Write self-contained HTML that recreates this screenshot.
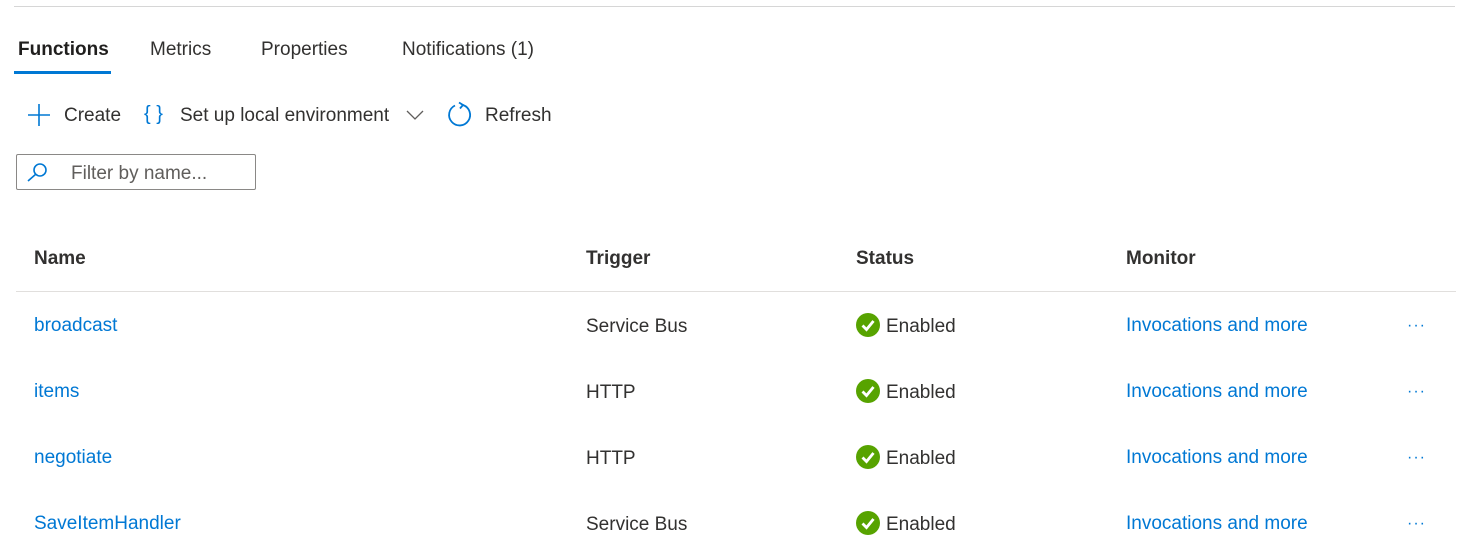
<!DOCTYPE html>
<html><head><style>
body{margin:0;width:1480px;height:552px;background:#fff;font-family:"Liberation Sans",sans-serif;color:#323130;position:relative;overflow:hidden}
.a{position:absolute;white-space:nowrap;line-height:24px;font-size:19px}
.l{color:#0078d4}
.h{font-weight:600;color:#323130}
.d{position:absolute;color:#0078d4;font-size:16px;letter-spacing:1px}
</style></head><body>
<div style="position:absolute;left:14px;top:6px;width:1441px;height:1px;background:#d6d6d6"></div>
<div class="a" style="left:18px;top:38px;font-weight:600;color:#201f1e">Functions</div>
<div class="a" style="left:150px;top:38px">Metrics</div>
<div class="a" style="left:261px;top:38px">Properties</div>
<div class="a" style="left:402px;top:38px">Notifications (1)</div>
<div style="position:absolute;left:14px;top:71px;width:97px;height:3px;background:#0078d4"></div>

<svg style="position:absolute;left:27px;top:103px" width="24" height="24"><path d="M12 1V23M1 12H23" stroke="#0078d4" stroke-width="1.6"/></svg>
<div class="a" style="left:64px;top:104px">Create</div>
<div class="a l" style="left:144px;top:102px;font-size:20px">{ }</div>
<div class="a" style="left:180px;top:104px">Set up local environment</div>
<svg style="position:absolute;left:406px;top:109px" width="18" height="12"><path d="M1 2L9 10L17 2" stroke="#605e5c" stroke-width="1.3" fill="none"/></svg>
<svg style="position:absolute;left:446px;top:101px" width="28" height="28"><path d="M9 4.5A10.5 10.5 0 1 0 17 4" stroke="#0078d4" stroke-width="1.8" fill="none"/><path d="M13 1.5L17 4L14 7.5" stroke="#0078d4" stroke-width="1.8" fill="none"/></svg>
<div class="a" style="left:485px;top:104px">Refresh</div>

<div style="position:absolute;left:16px;top:154px;width:238px;height:34px;border:1px solid #8a8886;border-radius:2px"></div>
<svg style="position:absolute;left:26px;top:161px" width="24" height="22"><circle cx="14" cy="9" r="6" stroke="#0078d4" stroke-width="1.6" fill="none"/><path d="M10 13L2 20" stroke="#0078d4" stroke-width="1.6"/></svg>
<div class="a" style="left:71px;top:162px;color:#605e5c">Filter by name...</div>

<div class="a h" style="left:34px;top:247px">Name</div>
<div class="a h" style="left:586px;top:247px">Trigger</div>
<div class="a h" style="left:856px;top:247px">Status</div>
<div class="a h" style="left:1126px;top:247px">Monitor</div>
<div style="position:absolute;left:16px;top:291px;width:1440px;height:1px;background:#e1dfdd"></div>

<div class="a l" style="left:34px;top:314px">broadcast</div>
<div class="a l" style="left:34px;top:380px">items</div>
<div class="a l" style="left:34px;top:446px">negotiate</div>
<div class="a l" style="left:34px;top:512px">SaveItemHandler</div>
<div class="a" style="left:586px;top:315px">Service Bus</div>
<div class="a" style="left:586px;top:381px">HTTP</div>
<div class="a" style="left:586px;top:447px">HTTP</div>
<div class="a" style="left:586px;top:513px">Service Bus</div>

<svg style="position:absolute;left:856px;top:313px" width="24" height="24"><circle cx="12" cy="12" r="12" fill="#57a300"/><path d="M6.5 12.5L10.5 16.5L17.5 8" stroke="#fff" stroke-width="2.8" fill="none"/></svg>
<svg style="position:absolute;left:856px;top:379px" width="24" height="24"><circle cx="12" cy="12" r="12" fill="#57a300"/><path d="M6.5 12.5L10.5 16.5L17.5 8" stroke="#fff" stroke-width="2.8" fill="none"/></svg>
<svg style="position:absolute;left:856px;top:445px" width="24" height="24"><circle cx="12" cy="12" r="12" fill="#57a300"/><path d="M6.5 12.5L10.5 16.5L17.5 8" stroke="#fff" stroke-width="2.8" fill="none"/></svg>
<svg style="position:absolute;left:856px;top:511px" width="24" height="24"><circle cx="12" cy="12" r="12" fill="#57a300"/><path d="M6.5 12.5L10.5 16.5L17.5 8" stroke="#fff" stroke-width="2.8" fill="none"/></svg>
<div class="a" style="left:886px;top:315px">Enabled</div>
<div class="a" style="left:886px;top:381px">Enabled</div>
<div class="a" style="left:886px;top:447px">Enabled</div>
<div class="a" style="left:886px;top:513px">Enabled</div>

<div class="a l" style="left:1126px;top:314px">Invocations and more</div>
<div class="a l" style="left:1126px;top:380px">Invocations and more</div>
<div class="a l" style="left:1126px;top:446px">Invocations and more</div>
<div class="a l" style="left:1126px;top:512px">Invocations and more</div>
<div class="d" style="left:1407px;top:317px">···</div>
<div class="d" style="left:1407px;top:383px">···</div>
<div class="d" style="left:1407px;top:449px">···</div>
<div class="d" style="left:1407px;top:515px">···</div>
</body></html>
